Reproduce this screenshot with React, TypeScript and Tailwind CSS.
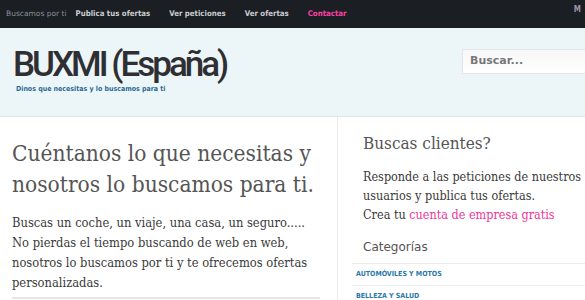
export default function App() {
  const navLinks = ["Publica tus ofertas", "Ver peticiones", "Ver ofertas"];
  const categorias = ["Automóviles y motos", "Belleza y salud"];
  return (
    <div className="w-[585px] h-[300px] overflow-hidden bg-white">
      {/* top bar */}
      <div className="h-[28px] bg-[#1b1e22] flex items-center pl-[6px] font-['DejaVu_Sans_Condensed','DejaVu_Sans',sans-serif] text-[7.8px] relative">
        <span className="font-['DejaVu_Sans',sans-serif] text-[#8a8f96] text-[7.5px] mr-[9px]">Buscamos por ti</span>
        {navLinks.map((l) => (
          <span key={l} className="text-[#c9ccd0] font-bold mr-[19px]">
            {l}
          </span>
        ))}
        <span className="text-[#ff3ea5] font-bold">Contactar</span>
        <span className="absolute right-[4px] top-[4px] text-[#9a96a8] font-bold text-[8px]">M</span>
      </div>

      {/* header */}
      <div className="h-[89px] bg-[#ecf5f8] border-b border-[#dde9ee] flex justify-between">
        <div className="pl-[13px] pt-[18px]">
          <h1 className="font-['Roboto',sans-serif] text-[35px] leading-[38px] text-[#2f2f33] tracking-[-3px] font-medium">
            BUXMI (España)
          </h1>
          <p className="font-['DejaVu_Sans_Condensed','DejaVu_Sans',sans-serif] text-[7px] font-bold text-[#2a6b95] pl-[3px] mt-[0px]">
            Dinos que necesitas y lo buscamos para ti
          </p>
        </div>
        <div className="pt-[21px]">
          <div className="w-[123px] h-[25px] bg-gradient-to-b from-[#f7f7f7] to-white border border-[#e2e6e8] border-r-0 flex items-center pl-[7px] font-['DejaVu_Sans',sans-serif] text-[11px] font-bold text-[#777]">
            Buscar...
          </div>
        </div>
      </div>

      {/* content */}
      <div className="flex font-['DejaVu_Serif_Condensed','DejaVu_Serif',serif]">
        <div className="w-[337px] pl-[12px] pr-[10px] pt-[21px] text-[#444]">
          <h2 className="text-[22.5px] leading-[31px] text-[#555]">
            Cuéntanos lo que necesitas y nosotros lo buscamos para ti.
          </h2>
          <p className="mt-[13px] pr-[6px] text-[12.8px] leading-[20px] text-[#3a3a3a]">
            Buscas un coche, un viaje, una casa, un seguro..... No pierdas el tiempo buscando de web en web, nosotros lo
            buscamos por ti y te ofrecemos ofertas personalizadas.
          </p>
          <div className="mt-[4px] h-[10px] border-t-2 border-[#e6e6e6] w-[308px]" />
        </div>
        <div className="flex-1 border-l border-[#ececec] h-[183px]">
          <div className="pl-[25px] pt-[14px]">
            <h3 className="text-[17px] leading-[24px] text-[#555]">Buscas clientes?</h3>
            <p className="mt-[12px] text-[12.5px] leading-[19px] text-[#3a3a3a]">
              Responde a las peticiones de nuestros usuarios y publica tus ofertas.
              <br />
              Crea tu <span className="text-[#f0359a]">cuenta de empresa gratis</span>
            </p>
          </div>
          <div className="pl-[25px] pt-[14px] font-['DejaVu_Sans',sans-serif] text-[12px] text-[#555] pb-[7px]">
            Categorías
          </div>
          <div className="ml-[14px]">
            {categorias.map((c) => (
              <div
                key={c}
                className="border-t border-[#ececec] h-[22px] flex items-center pl-[4px] font-['DejaVu_Sans_Condensed','DejaVu_Sans',sans-serif] text-[7px] font-bold uppercase text-[#2a78a8]"
              >
                {c}
              </div>
            ))}
          </div>
        </div>
      </div>
    </div>
  );
}
